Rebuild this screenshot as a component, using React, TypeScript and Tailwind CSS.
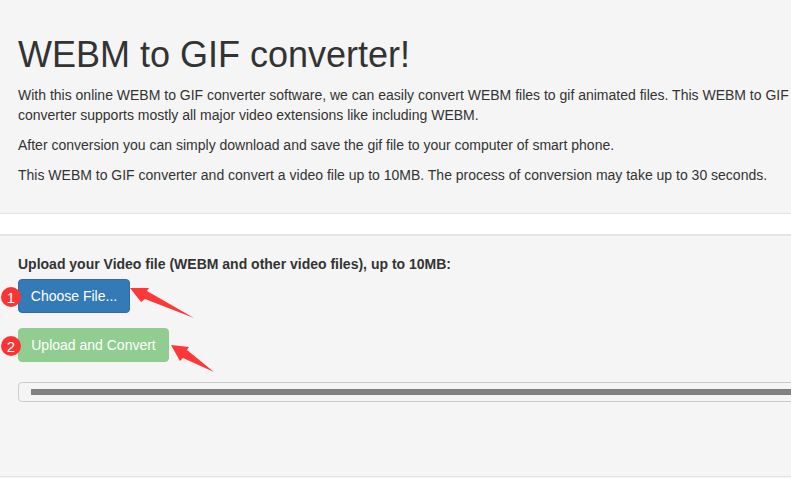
// App.tsx
const ARROWS = [
  { key: "choose", points: "130,288 149,288 147,291 194,318 145,299 141,302" },
  { key: "upload", points: "171,345 189,347 187,350 214,372 183,358 180,361" },
];

function StepBadge({ n, className }: { n: number; className: string }) {
  return (
    <span
      className={`absolute left-[1px] flex h-[20px] w-[20px] items-center justify-center rounded-full bg-[#fc3334] text-[15px] leading-none text-white ${className}`}
    >
      {n}
    </span>
  );
}

export default function App() {
  return (
    <div className="relative h-[478px] w-[791px] overflow-hidden bg-[#f5f5f5] font-['Liberation_Sans',Arial,sans-serif] text-[14px] leading-[20px] text-[#333]">
      <section className="h-[213px] w-[820px] px-[18px] pt-[35px]">
        <h1 className="mb-[10px] text-[36px] leading-[39.6px] font-normal">WEBM to GIF converter!</h1>
        <p className="mb-[10px] w-[780px]">
          With this online WEBM to GIF converter software, we can easily convert WEBM files to gif animated files. This WEBM to GIF converter supports mostly all major video extensions like including WEBM.
        </p>
        <p className="mb-[10px]">After conversion you can simply download and save the gif file to your computer of smart phone.</p>
        <p>This WEBM to GIF converter and convert a video file up to 10MB. The process of conversion may take up to 30 seconds.</p>
      </section>

      <div className="h-[23px] border-t border-b-2 border-t-[#e3e3e3] border-b-[#e4e4e4] bg-white" />

      <section className="h-[241px] border-b border-[#e3e3e3] px-[18px] pt-[18px]">
        <label className="mb-[5px] block font-bold">Upload your Video file (WEBM and other video files), up to 10MB:</label>
        <button className="block h-[34px] w-[112px] rounded-[4px] border border-[#2e6da4] bg-[#337ab7] text-white">Choose File...</button>
        <button className="mt-[15px] block h-[34px] w-[151px] rounded-[4px] border border-[#8fcc8f] bg-[#91cd91] text-white">Upload and Convert</button>
        <div className="mt-[20px] flex h-[20px] w-[800px] items-center rounded-[4px] border border-[#ccc] bg-[#f5f5f5] pl-[12px]">
          <div className="h-[6px] w-full bg-[#808080]" />
        </div>
      </section>

      <StepBadge n={1} className="top-[287px]" />
      <StepBadge n={2} className="top-[336px]" />

      <svg className="absolute top-0 left-0" width="791" height="478" viewBox="0 0 791 478">
        {ARROWS.map((a) => (
          <polygon key={a.key} points={a.points} fill="#fc3838" />
        ))}
      </svg>
    </div>
  );
}
